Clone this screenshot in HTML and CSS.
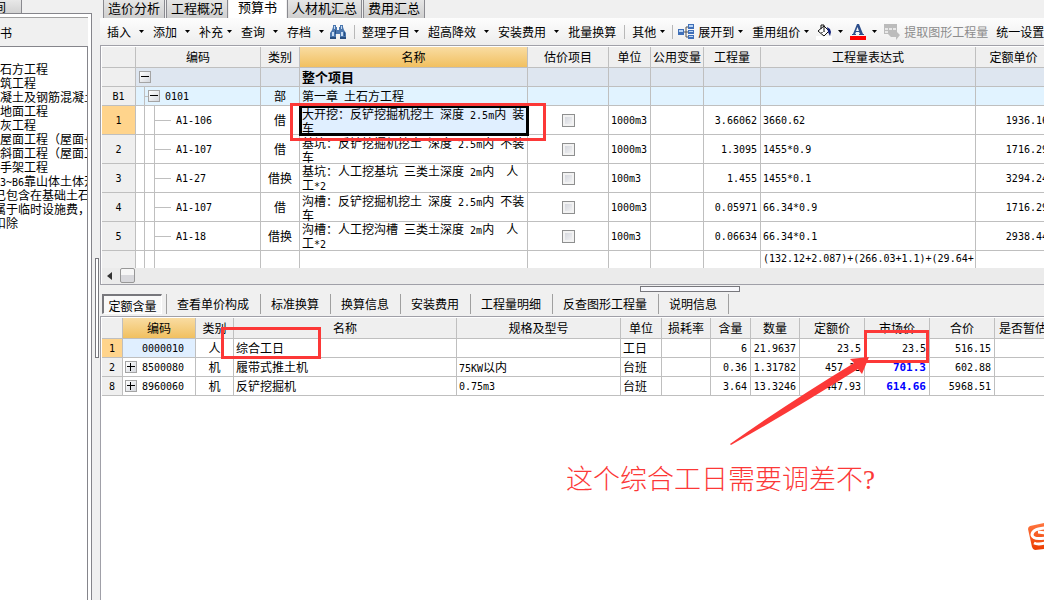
FILE: index.html
```html
<!DOCTYPE html>
<html lang="zh-CN">
<head>
<meta charset="utf-8">
<title>预算书</title>
<link rel="stylesheet" href="styles.css">
</head>
<body>
<svg class="defs" aria-hidden="true">
  <symbol id="caret" viewBox="0 0 7 4"><path d="M1 0h5L3.500 3z" fill="#000"/></symbol>
  <symbol id="minus" viewBox="0 0 8 8"><path d="M0 3h8v1H0z" fill="#000"/></symbol>
  <symbol id="plus" viewBox="0 0 8 8"><path d="M0 3h8v1H0zM3 0h1v8H3z" fill="#000"/></symbol>
</svg>
<div class="app">
  <aside class="side">
    <div class="side-tabs"><button class="side-tab">间</button></div>
    <div class="side-panel">
      <div class="side-head">书</div>
      <ul class="tree">
        <li>石方工程</li>
        <li>筑工程</li>
        <li>凝土及钢筋混凝土</li>
        <li>地面工程</li>
        <li>灰工程</li>
        <li>屋面工程（屋面+</li>
        <li>斜面工程（屋面工</li>
        <li>手架工程</li>
        <li><span class="lat">3~B6</span>靠山体土体开</li>
        <li class="half">已包含在基础土石方</li>
        <li class="half">属于临时设施费，</li>
        <li class="half">扣除</li>
      </ul>
    </div>
  </aside>
  <div class="v-split"><span class="v-grip"></span></div>
  <main class="main">
    <nav class="tabs">
      <button class="tab">造价分析</button>
      <button class="tab">工程概况</button>
      <button class="tab active">预算书</button>
      <button class="tab">人材机汇总</button>
      <button class="tab">费用汇总</button>
    </nav>
    <div class="toolbar">
      <button class="tool">插入<svg class="caret far"><use href="#caret"/></svg></button>
      <button class="tool">添加<svg class="caret far"><use href="#caret"/></svg></button>
      <button class="tool">补充<svg class="caret"><use href="#caret"/></svg></button>
      <button class="tool">查询<svg class="caret far"><use href="#caret"/></svg></button>
      <button class="tool">存档<svg class="caret far"><use href="#caret"/></svg></button>
      <button class="tool find" aria-label="查找"><svg class="icon" viewBox="0 0 16 16"><path d="M3 1h3v2h1v3h2V3h1V1h3v2l1 3 2 3v6h-6v-5H6v5H0V9l2-3 1-3z" fill="#4a76ae"/><path d="M4 2h1v3H4zM11 2h1v3h-1zM2 8h2v4H2zM11 8h2v4h-2z" fill="#c4daf2"/><path d="M0 13h6v2H0zM10 13h6v2h-6zM5 6h1v4H5zM14 8h1v4h-1z" fill="#274e80"/></svg></button>
      <span class="sep"></span>
      <button class="tool">整理子目<svg class="caret"><use href="#caret"/></svg></button>
      <button class="tool">超高降效<svg class="caret far"><use href="#caret"/></svg></button>
      <button class="tool">安装费用<svg class="caret far"><use href="#caret"/></svg></button>
      <button class="tool">批量换算</button>
      <span class="sep"></span>
      <button class="tool">其他<svg class="caret"><use href="#caret"/></svg></button>
      <span class="sep tight"></span>
      <button class="tool compact"><svg class="icon lead" viewBox="0 0 16 16"><path d="M6 8h2V3h3M8 8h3M8 8v5h3" fill="none" stroke="#555"/><path d="M0 5h6v6H0zM10 0h6v5h-6zM10 6h6v4h-6zM10 11h6v4h-6z" fill="#3f6fb8"/><path d="M1 6h4v2H1zM11 1h4v2h-4zM11 7h4v1h-4zM11 12h4v1h-4z" fill="#b9d4f4"/></svg>展开到<svg class="caret"><use href="#caret"/></svg></button>
      <button class="tool">重用组价<svg class="caret"><use href="#caret"/></svg></button>
      <button class="tool compact" aria-label="填充颜色"><svg class="icon" viewBox="0 0 16 16"><path d="M0 12h16v4H0z" fill="#fff"/><path d="M2 7l6-5 5 5-5 5z" fill="#fff" stroke="#111"/><path d="M5 5V1h3v6" fill="none" stroke="#111"/><path d="M11 3l3 2 1 3-1 4-2-4z" fill="#16247c"/><path d="M7 7h2v1H7zM5 8h2v1H5z" fill="#777"/></svg><svg class="caret far"><use href="#caret"/></svg></button>
      <button class="tool compact" aria-label="字体颜色"><svg class="icon" viewBox="0 0 16 16"><path d="M0 12h16v4H0z" fill="#f00"/><path d="M7 0h2l4 10h1v1H9v-1h1L9 8H6l-1 2h1v1H2v-1h1zM6 7h3L7.500 3z" fill="#2d4f8c" fill-rule="evenodd"/></svg><svg class="caret far"><use href="#caret"/></svg></button>
      <button class="tool compact" disabled><svg class="icon lead" viewBox="0 0 16 16"><path d="M0 0h13v8l3 3-4 5v-3H7l-3-3H0z" fill="#bcbcbc"/><path d="M1 4h3v2H1zM5 4h3v2H5zM9 4h3v2H9zM1 7h3v2H1z" fill="#e8e8e8"/></svg>提取图形工程量</button>
      <button class="tool">统一设置</button>
    </div>

    <section class="pane upper">
      <div class="viewport">
        <table class="grid budget">
          <colgroup><col class="w34"><col class="w125"><col class="w39"><col class="w228"><col class="w81"><col class="w42"><col class="w53"><col class="w57"><col class="w215"><col></colgroup>
          <thead>
            <tr><th></th><th>编码</th><th>类别</th><th class="hot">名称</th><th>估价项目</th><th>单位</th><th>公用变量</th><th>工程量</th><th>工程量表达式</th><th>定额单价</th></tr>
          </thead>
          <tbody>
            <tr class="root"><th></th><td class="code"><div class="node"><span class="pad3"></span><button class="toggle" aria-label="折叠"><svg><use href="#minus"/></svg></button></div></td><td></td><td class="title">整个项目</td><td></td><td></td><td></td><td></td><td></td><td></td></tr>
            <tr class="chapter"><th class="lat">B1</th><td class="code"><div class="node"><span class="rail a"></span><span class="stub short"></span><button class="toggle" aria-label="折叠"><svg><use href="#minus"/></svg></button><span class="lat label">0101</span></div></td><td class="mid">部</td><td>第一章<span class="lat"> </span>土石方工程</td><td></td><td></td><td></td><td></td><td></td><td></td></tr>
            <tr class="item"><th class="lat cur">1</th><td class="code"><div class="node"><span class="rail a"></span><span class="rail b"></span><span class="stub"></span><span class="lat label">A1-106</span></div></td><td class="mid">借</td><td class="name picked">大开挖：反铲挖掘机挖土<span class="lat"> </span>深度<span class="lat"> 2.5m</span>内<span class="lat"> </span>装<br>车</td><td class="mid"><input type="checkbox" aria-label="估价项目 1"></td><td class="lat">1000m3</td><td></td><td class="lat num">3.66062</td><td class="lat">3660.62</td><td class="lat num">1936.16</td></tr>
            <tr class="item"><th class="lat">2</th><td class="code"><div class="node"><span class="rail a"></span><span class="rail b"></span><span class="stub"></span><span class="lat label">A1-107</span></div></td><td class="mid">借</td><td class="name">基坑：反铲挖掘机挖土<span class="lat"> </span>深度<span class="lat"> 2.5m</span>内<span class="lat"> </span>不装<br>车</td><td class="mid"><input type="checkbox" aria-label="估价项目 2"></td><td class="lat">1000m3</td><td></td><td class="lat num">1.3095</td><td class="lat">1455*0.9</td><td class="lat num">1716.29</td></tr>
            <tr class="item"><th class="lat">3</th><td class="code"><div class="node"><span class="rail a"></span><span class="rail b"></span><span class="stub"></span><span class="lat label">A1-27</span></div></td><td class="mid">借换</td><td class="name">基坑：人工挖基坑<span class="lat"> </span>三类土深度<span class="lat"> 2m</span>内<span class="lat">  </span>人<br>工<span class="lat">*2</span></td><td class="mid"><input type="checkbox" aria-label="估价项目 3"></td><td class="lat">100m3</td><td></td><td class="lat num">1.455</td><td class="lat">1455*0.1</td><td class="lat num">3294.24</td></tr>
            <tr class="item"><th class="lat">4</th><td class="code"><div class="node"><span class="rail a"></span><span class="rail b"></span><span class="stub"></span><span class="lat label">A1-107</span></div></td><td class="mid">借</td><td class="name">沟槽：反铲挖掘机挖土<span class="lat"> </span>深度<span class="lat"> 2.5m</span>内<span class="lat"> </span>不装<br>车</td><td class="mid"><input type="checkbox" aria-label="估价项目 4"></td><td class="lat">1000m3</td><td></td><td class="lat num">0.05971</td><td class="lat">66.34*0.9</td><td class="lat num">1716.29</td></tr>
            <tr class="item"><th class="lat">5</th><td class="code"><div class="node"><span class="rail a"></span><span class="rail b"></span><span class="stub"></span><span class="lat label">A1-18</span></div></td><td class="mid">借换</td><td class="name">沟槽：人工挖沟槽<span class="lat"> </span>三类土深度<span class="lat"> 2m</span>内<span class="lat">  </span>人<br>工<span class="lat">*2</span></td><td class="mid"><input type="checkbox" aria-label="估价项目 5"></td><td class="lat">100m3</td><td></td><td class="lat num">0.06634</td><td class="lat">66.34*0.1</td><td class="lat num">2938.44</td></tr>
            <tr class="item"><th></th><td class="code"><div class="node"><span class="rail a"></span><span class="rail b"></span></div></td><td></td><td></td><td></td><td></td><td></td><td></td><td class="lat top">(132.12+2.087)+(266.03+1.1)+(29.64+</td><td></td></tr>
          </tbody>
        </table>
      </div>
      <div class="scrollbar"><button class="arrow" aria-label="向左滚动"><svg viewBox="0 0 5 8"><path d="M5 0v8L0 4z" fill="#333"/></svg></button><span class="thumb"></span></div>
    </section>

    <div class="h-split"><span class="h-grip"></span></div>

    <nav class="subtabs">
      <button class="subtab on">定额含量</button>
      <button class="subtab">查看单价构成</button>
      <button class="subtab">标准换算</button>
      <button class="subtab">换算信息</button>
      <button class="subtab">安装费用</button>
      <button class="subtab">工程量明细</button>
      <button class="subtab">反查图形工程量</button>
      <button class="subtab last">说明信息</button>
    </nav>

    <section class="pane lower">
      <table class="grid">
        <colgroup><col class="w21"><col class="w73"><col class="w38"><col class="w223"><col class="w164"><col class="w41"><col class="w49"><col class="w40"><col class="w49"><col class="w65"><col class="w65"><col class="w65"><col></colgroup>
        <thead>
          <tr><th></th><th class="hot">编码</th><th>类别</th><th>名称</th><th>规格及型号</th><th>单位</th><th>损耗率</th><th>含量</th><th>数量</th><th>定额价</th><th>市场价</th><th>合价</th><th>是否暂估</th></tr>
        </thead>
        <tbody>
          <tr><th class="lat cur">1</th><td class="code soft"><div class="node"><span class="pad19"></span><span class="lat">0000010</span></div></td><td class="mid">人</td><td>综合工日</td><td></td><td>工日</td><td></td><td class="lat num">6</td><td class="lat num">21.9637</td><td class="lat num">23.5</td><td class="lat num">23.5</td><td class="lat num">516.15</td><td></td></tr>
          <tr><th class="lat">2</th><td class="code"><div class="node"><span class="pad2"></span><button class="toggle" aria-label="展开"><svg><use href="#plus"/></svg></button><span class="lat label">8500080</span></div></td><td class="mid">机</td><td>履带式推土机</td><td><span class="lat">75KW</span>以内</td><td>台班</td><td></td><td class="lat num">0.36</td><td class="lat num">1.31782</td><td class="lat num">457.13</td><td class="lat num price">701.3</td><td class="lat num">602.88</td><td></td></tr>
          <tr><th class="lat">8</th><td class="code"><div class="node"><span class="pad2"></span><button class="toggle" aria-label="展开"><svg><use href="#plus"/></svg></button><span class="lat label">8960060</span></div></td><td class="mid">机</td><td>反铲挖掘机</td><td class="lat">0.75m3</td><td>台班</td><td></td><td class="lat num">3.64</td><td class="lat num">13.3246</td><td class="lat num">447.93</td><td class="lat num price">614.66</td><td class="lat num">5968.51</td><td></td></tr>
        </tbody>
      </table>
    </section>
  </main>
  <svg class="marks" width="1044" height="600" aria-hidden="true">
    <g fill="none" stroke="#fc3837" stroke-width="3">
      <rect x="291.500" y="104.500" width="253" height="35"/>
      <rect x="222.500" y="328.500" width="97" height="29"/>
      <rect x="865.500" y="331.500" width="62" height="30"/>
    </g>
    <path d="M869 357L850 359L854 363Q788 403 730 444L731 445Q793 410 858 369L862 374Z" fill="#fc3837"/>
  </svg>
  <p class="question">这个综合工日需要调差不?</p>
  <svg class="badge" width="16" height="28" viewBox="0 0 16 28" aria-hidden="true"><defs><linearGradient id="g" x1="0" y1="0" x2="0" y2="1"><stop offset="0" stop-color="#ff7640"/><stop offset="1" stop-color="#ec3d00"/></linearGradient></defs><path d="M0 6q0-2 2-3L16 0v26L7 27q-2 0-3-3z" fill="url(#g)"/><path d="M17 5Q4 6 4 12q1 5 13 3M17 10q-6-1-7-1M6 20q4 2 11 0" fill="none" stroke="#fff" stroke-width="3"/></svg>
</div>
</body>
</html>
```
FILE: styles.css
```css
* { box-sizing: border-box; }
html, body { height: 100%; }
body {
  margin: 0;
  overflow: hidden;
  background: #fff;
  color: #000;
  font: 12px/14px "Noto Sans CJK SC", sans-serif;
}
button {
  margin: 0;
  padding: 0;
  border: 0;
  background: none;
  color: inherit;
  font: inherit;
  white-space: nowrap;
}
.defs { position: absolute; width: 0; height: 0; }
.lat {
  font-family: "DejaVu Sans Mono", monospace;
  font-size: 10px;
  line-height: 12px;
  white-space: pre;
}
.app { position: relative; display: flex; height: 100%; overflow: hidden; }

/* left panel */
.side { display: flex; flex-direction: column; flex: none; width: 92px; background: #f0f0f0; }
.side-tabs { height: 13px; overflow: hidden; }
.side-tab {
  display: block;
  width: 22px;
  height: 13px;
  border-right: 1px solid #8a8a8f;
  background: linear-gradient(#e8e8e8, #d2d2d2);
  line-height: 10px;
  text-align: left;
  text-indent: -6px;
  overflow: hidden;
}
.side-panel {
  display: flex;
  flex-direction: column;
  flex: 1;
  padding: 3px 3px 0 0;
  border: solid #85858b;
  border-width: 1px 1px 0 0;
  background: #fff;
}
.side-head {
  height: 29px;
  border-top: 1px solid #a0a0a0;
  background: #f0f0f0;
  line-height: 30px;
}
.tree {
  flex: 1;
  margin: 0;
  padding: 15px 0 0;
  border: solid #85858b;
  border-width: 1px 1px 0 0;
  list-style: none;
  white-space: nowrap;
  overflow: hidden;
}
.tree li { height: 14px; }
.half { text-indent: -6px; }

/* splitters */
.v-split { flex: none; width: 8px; padding: 258px 1px 0 3px; background: #f0f0f0; }
.v-grip { display: block; height: 100px; border: 1px solid #77777c; background: #fff; }
.h-split { height: 8px; padding: 1px 0 0 540px; }
.h-grip { display: block; width: 100px; height: 6px; border: 1px solid #77777c; background: #f8f8fc; }

.main { display: flex; flex-direction: column; flex: 1; min-width: 0; background: #f0f0f0; overflow: hidden; }

/* page tabs */
.tabs { display: flex; gap: 1px; height: 18px; padding-left: 3px; font-size: 13px; }
.tab {
  height: 18px;
  padding: 0 4px 2px;
  border: solid #8a8a90;
  border-width: 0 1px;
  background: linear-gradient(#e6e6e6, #cfcfcf);
  line-height: 14px;
}
.tab.active { padding: 0 8px 6px; border-color: #fff; background: #fff; }

/* toolbar */
.toolbar {
  display: flex;
  align-items: center;
  gap: 8px;
  height: 27px;
  padding-left: 7px;
  background: linear-gradient(#fdfdfd, #ededed);
  overflow: hidden;
}
.tool { display: flex; align-items: center; flex: none; height: 24px; }
.tool:disabled { color: #8c8c8c; }
.caret { width: 7px; height: 4px; margin-left: 3px; }
.caret.far { margin-left: 7px; }
.icon { width: 16px; height: 16px; }
.icon.lead { margin-right: 4px; }
.compact { margin-left: -2px; }
.compact .far { margin-left: 5px; }
.find { margin-left: -3px; }
.sep { flex: none; width: 1px; height: 14px; margin-right: -1px; background: #b8b8b8; }
.sep.tight { margin-left: -2px; }

/* grids */
.pane { border: solid #a0a0a8; border-width: 1px 0 0 1px; padding: 1px 0 0 1px; background: #fff; }
.upper { flex: none; border-bottom-width: 1px; }
.lower { flex: 1; overflow: hidden; }
.viewport { height: 221px; overflow: hidden; }
.grid {
  width: 100%;
  min-width: 950px;
  table-layout: fixed;
  border-collapse: separate;
  border-spacing: 0;
}
.w21 { width: 21px; } .w34 { width: 34px; } .w38 { width: 38px; } .w39 { width: 39px; }
.w40 { width: 40px; } .w41 { width: 41px; } .w42 { width: 42px; } .w49 { width: 49px; }
.w53 { width: 53px; } .w57 { width: 57px; } .w65 { width: 65px; } .w73 { width: 73px; }
.w81 { width: 81px; } .w125 { width: 125px; } .w164 { width: 164px; } .w215 { width: 215px; }
.w223 { width: 223px; } .w228 { width: 228px; }
.grid th, .grid td {
  height: 19px;
  padding: 0 2px;
  border: solid #bfbfbf;
  border-width: 0 1px 1px 0;
  text-align: left;
  white-space: pre;
  overflow: hidden;
}
.grid th { background: #efefef; font-weight: 400; text-align: center; }
.grid th.lat, .grid td.lat { padding-top: 2px; }
.grid thead th { height: 21px; }
.grid .hot { background: linear-gradient(#f9dca2, #f1c060); }
.grid .cur { background: #ffd48c; }
.grid .root td { background: #dee6f0; }
.grid .chapter td { background: #e1f3ff; }
.grid .title { font-size: 13px; font-weight: 700; }
.grid .item th, .grid .item td { height: 29px; }
.grid .name { line-height: 13px; }
.name .lat { line-height: 10px; }
.grid .picked { background: #e0efff; outline: 3px solid #000; outline-offset: -2px; }
.grid .soft { background: #e0efff; }
.grid .mid { text-align: center; }
.grid .num { padding-right: 3px; text-align: right; }
.grid .price { color: #00f; font-size: 11px; font-weight: 700; }
.grid .top { vertical-align: top; }
.grid .code { padding: 0; }
.node { display: flex; align-items: center; height: 18px; }
.item .node { height: 28px; }
.rail { align-self: stretch; border-right: 1px solid #bfbfbf; }
.rail.a { width: 9px; }
.rail.b { width: 10px; }
.stub { width: 16px; height: 1px; background: #bfbfbf; }
.stub.short { width: 3px; }
.pad2 { width: 2px; }
.pad3 { width: 3px; }
.pad19 { width: 19px; }
.node .lat { padding-top: 2px; }
.label { margin-left: 5px; }
.toggle {
  display: flex;
  align-items: center;
  justify-content: center;
  width: 12px;
  height: 12px;
  border: 1px solid #a4a4a4;
  background: linear-gradient(135deg, #fff, #d4d7dd);
}
.toggle svg { width: 8px; height: 8px; }
input[type="checkbox"] {
  display: block;
  appearance: none;
  width: 13px;
  height: 13px;
  margin: 0 auto;
  border: 1px solid #8e8f8f;
  background: linear-gradient(135deg, #cdd0d8, #f8f8f8);
  box-shadow: inset 0 0 0 2px #f2f2f2;
}
.scrollbar { display: flex; height: 16px; padding-left: 5px; background: #ebebeb; }
.arrow { display: flex; align-items: center; width: 13px; }
.arrow svg { width: 5px; height: 8px; }
.thumb { width: 15px; height: 15px; border: 1px solid #979797; border-radius: 2px; background: linear-gradient(#f6f6f6 50%, #d8d8dc 50%); }

/* detail tabs */
.subtabs { display: flex; align-items: center; height: 23px; padding: 0 0 1px 2px; }
.subtab { height: 20px; padding: 0 11px 0 10px; border-left: 1px solid #a0a0a0; }
.subtab.last { border-right: 1px solid #a0a0a0; }
.subtab.on {
  width: 60px;
  margin-right: 4px;
  padding: 2px 0 0;
  border: 1px solid #fff;
  border-top: 2px solid #77777c;
  border-left: 2px solid #77777c;
  background: #f8f8f8;
}

/* annotations over the window */
.marks { position: absolute; top: 0; left: 0; pointer-events: none; }
.question {
  position: absolute;
  top: 464px;
  left: 566px;
  margin: 0;
  color: #fc3837;
  font: 300 27px/32px "Liberation Serif", "Noto Sans CJK SC", serif;
  white-space: nowrap;
}
.badge { position: absolute; top: 523px; right: 0; }
```
